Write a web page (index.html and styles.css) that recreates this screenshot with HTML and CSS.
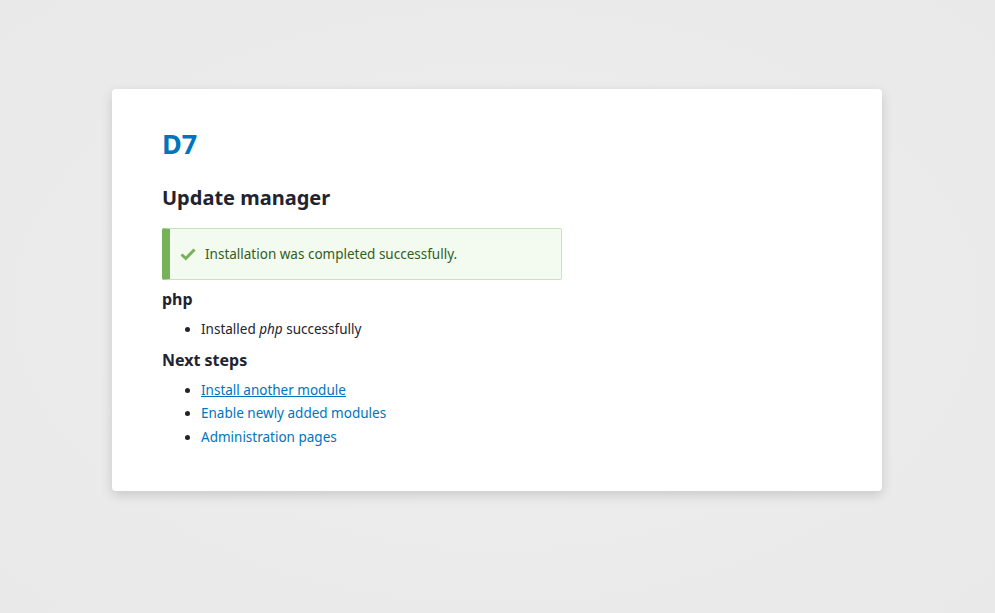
FILE: index.html
```html
<!DOCTYPE html>
<html>
<head>
<meta charset="utf-8">
<link rel="stylesheet" href="styles.css">
</head>
<body>
<div class="page">
  <div class="card">
    <h1 class="site-name"><a href="#">D7</a></h1>
    <h2 class="page-title">Update manager</h2>
    <div class="messages status">
      <svg class="check" width="16" height="14" viewBox="0 0 16 14"><path d="M1.5 7.5 L5.8 11.5 L14.5 2.5" fill="none" stroke="#77b259" stroke-width="3"/></svg>
      <span>Installation was completed successfully.</span>
    </div>
    <h3 class="section-title first">php</h3>
    <ul class="list">
      <li>Installed <em>php</em> successfully</li>
    </ul>
    <h3 class="section-title">Next steps</h3>
    <ul class="list">
      <li><a href="#" class="underlined">Install another module</a></li>
      <li><a href="#">Enable newly added modules</a></li>
      <li><a href="#">Administration pages</a></li>
    </ul>
  </div>
</div>
</body>
</html>
```
FILE: styles.css
```css
html, body {
  margin: 0;
  padding: 0;
  height: 100%;
}
body {
  background: radial-gradient(ellipse at center, #eeeeee 0%, #e8e9e8 100%);
  font-family: "Noto Sans", "DejaVu Sans", sans-serif;
  color: #333;
  font-size: 13.5px;
}
.page {
  padding: 89px 0 0 112px;
  display: flex;
}
.card {
  width: 670px;
  background: #fff;
  border-radius: 4px;
  box-shadow: 0 4px 12px rgba(0,0,0,0.15);
  padding: 36px 50px 42px;
}
.site-name {
  margin: 0;
  font-size: 27px;
  line-height: 38px;
  font-weight: bold;
}
.site-name a {
  color: #0074bd;
  text-decoration: none;
}
.page-title {
  margin: 20px 0 0;
  font-size: 20px;
  line-height: 30px;
  font-weight: bold;
  color: #222330;
}
.messages {
  margin-top: 15px;
  width: 400px;
  box-sizing: border-box;
  height: 52px;
  display: flex;
  align-items: center;
  background: #f3faef;
  border: 1px solid #c9e1bd;
  border-left: 8px solid #77b259;
  border-radius: 2px;
  padding-left: 10px;
  color: #325e1c;
}
.check {
  margin-right: 9px;
}
.section-title {
  margin: 7px 0 0;
  font-size: 16px;
  line-height: 22px;
  font-weight: bold;
  color: #222330;
}
.section-title.first {
  margin-top: 8px;
}
.list {
  margin: 8px 0 0;
  padding-left: 39px;
  line-height: 23.5px;
}
.list li {
  color: #222330;
}
.list a {
  color: #0074bd;
  text-decoration: none;
}
.list a.underlined {
  text-decoration: underline;
}
```
